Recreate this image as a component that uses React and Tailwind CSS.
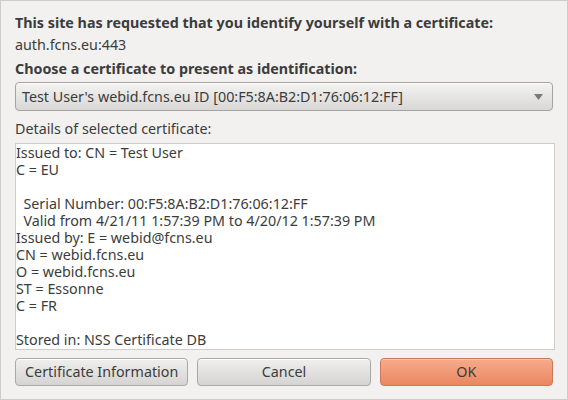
export default function App() {
  const lines = [
    "Issued to: CN = Test User",
    "C = EU",
    "",
    "  Serial Number: 00:F5:8A:B2:D1:76:06:12:FF",
    "  Valid from 4/21/11 1:57:39 PM to 4/20/12 1:57:39 PM",
    "Issued by: E = webid@fcns.eu",
    "CN = webid.fcns.eu",
    "O = webid.fcns.eu",
    "ST = Essonne",
    "C = FR",
    "",
    "Stored in: NSS Certificate DB",
  ];

  return (
    <div className="w-[568px] h-[400px] bg-[#f2f1f0] border border-[#cfcdc9] flex flex-col px-[14px] text-[#3c3c3c] text-[14.3px] font-['Noto_Sans',sans-serif]">
      <div className="mt-[13px] font-bold leading-[18px]">
        This site has requested that you identify yourself with a certificate:
      </div>
      <div className="mt-[4px] leading-[18px]">auth.fcns.eu:443</div>
      <div className="mt-[6px] font-bold leading-[18px]">
        Choose a certificate to present as identification:
      </div>
      <div className="mt-[4px] h-[29px] w-[538px] rounded-[4px] border border-[#a5a4a2] bg-gradient-to-b from-[#f3f3f2] to-[#d9d8d6] flex items-center justify-between pl-[6px] pr-[9px] shadow-[inset_0_1px_0_#ffffff]">
        <span>Test User's webid.fcns.eu ID [00:F5:8A:B2:D1:76:06:12:FF]</span>
        <svg width="9" height="6" viewBox="0 0 9 6">
          <path d="M0 0 H9 L4.5 6 Z" fill="#7a7976" />
        </svg>
      </div>
      <div className="mt-[9px] leading-[18px]">Details of selected certificate:</div>
      <div className="mt-[5px] h-[207px] w-[540px] bg-white border border-[#cfcdca] overflow-hidden">
        {lines.map((l, i) => (
          <div key={i} className="h-[17px] leading-[17px] whitespace-pre">
            {l}
          </div>
        ))}
      </div>
      <div className="mt-[8px] flex gap-[9px]">
        <button className="w-[174px] h-[28px] rounded-[4px] border border-[#a9a8a6] bg-gradient-to-b from-[#efefee] to-[#d5d4d2] shadow-[inset_0_1px_0_#ffffff] text-[#3c3c3c]">
          Certificate Information
        </button>
        <button className="w-[174px] h-[28px] rounded-[4px] border border-[#a9a8a6] bg-gradient-to-b from-[#efefee] to-[#d5d4d2] shadow-[inset_0_1px_0_#ffffff] text-[#3c3c3c]">
          Cancel
        </button>
        <button className="w-[174px] h-[28px] rounded-[4px] border border-[#c9795a] bg-gradient-to-b from-[#f6ab8b] to-[#ea8760] shadow-[inset_0_1px_0_#f9c4ad] text-[#3c3c3c]">
          OK
        </button>
      </div>
    </div>
  );
}
